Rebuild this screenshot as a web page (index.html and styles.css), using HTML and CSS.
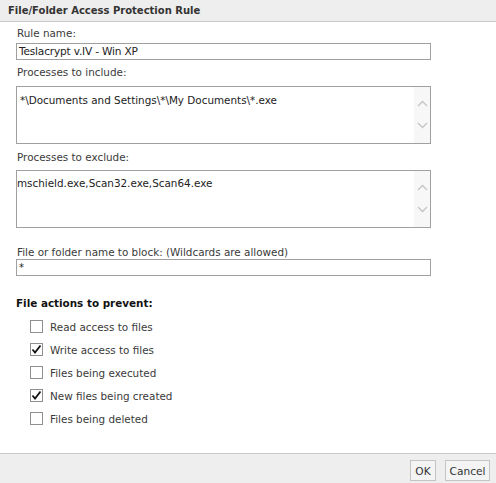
FILE: index.html
```html
<!DOCTYPE html>
<html>
<head>
<meta charset="utf-8">
<link rel="stylesheet" href="styles.css">
</head>
<body>
<div class="dialog">
  <div class="titlebar">File/Folder Access Protection Rule</div>
  <div class="content">
    <div class="label l-rule">Rule name:</div>
    <div class="input">Teslacrypt v.IV - Win XP</div>
    <div class="label l-inc">Processes to include:</div>
    <div class="textbox">
      <div class="textbox-text">*\Documents and Settings\*\My Documents\*.exe</div>
      <div class="scroll">
        <svg class="chev" width="11" height="7" viewBox="0 0 11 7"><path d="M1 6 L5.5 1.5 L10 6" fill="none" stroke="#c4c4c4" stroke-width="1.3"/></svg>
        <svg class="chev" width="11" height="7" viewBox="0 0 11 7"><path d="M1 1 L5.5 5.5 L10 1" fill="none" stroke="#c4c4c4" stroke-width="1.3"/></svg>
      </div>
    </div>
    <div class="label l-exc">Processes to exclude:</div>
    <div class="textbox">
      <div class="textbox-text t2">mschield.exe,Scan32.exe,Scan64.exe</div>
      <div class="scroll">
        <svg class="chev" width="11" height="7" viewBox="0 0 11 7"><path d="M1 6 L5.5 1.5 L10 6" fill="none" stroke="#c4c4c4" stroke-width="1.3"/></svg>
        <svg class="chev" width="11" height="7" viewBox="0 0 11 7"><path d="M1 1 L5.5 5.5 L10 1" fill="none" stroke="#c4c4c4" stroke-width="1.3"/></svg>
      </div>
    </div>
    <div class="label l-block">File or folder name to block: (Wildcards are allowed)</div>
    <div class="input small">*</div>
    <div class="section">File actions to prevent:</div>
    <div class="checks">
      <div class="row"><span class="cb"></span><span>Read access to files</span></div>
      <div class="row"><span class="cb checked"><svg width="11" height="11" viewBox="0 0 11 11"><path d="M1.5 5.5 L4 8.5 L9.5 1.5" fill="none" stroke="#111" stroke-width="1.8"/></svg></span><span>Write access to files</span></div>
      <div class="row"><span class="cb"></span><span>Files being executed</span></div>
      <div class="row"><span class="cb checked"><svg width="11" height="11" viewBox="0 0 11 11"><path d="M1.5 5.5 L4 8.5 L9.5 1.5" fill="none" stroke="#111" stroke-width="1.8"/></svg></span><span>New files being created</span></div>
      <div class="row"><span class="cb"></span><span>Files being deleted</span></div>
    </div>
  </div>
  <div class="footer">
    <button class="btn ok">OK</button>
    <button class="btn cancel">Cancel</button>
  </div>
</div>
</body>
</html>
```

FILE: styles.css
```css
html, body {
  margin: 0;
  padding: 0;
  background: #ffffff;
}
body {
  font-family: "DejaVu Sans", Verdana, sans-serif;
  font-size: 10.4px;
  color: #333333;
}
.dialog {
  width: 496px;
  height: 483px;
  display: flex;
  flex-direction: column;
}
.titlebar {
  height: 22px;
  box-sizing: border-box;
  background: #eeeeee;
  border-bottom: 1px solid #c8c8c8;
  padding-left: 8px;
  font-weight: bold;
  font-size: 10px;
  line-height: 21px;
  color: #333333;
}
.content {
  flex: 1;
  padding: 0 65px 0 16px;
}
.label {
  padding-left: 1px;
  line-height: 14px;
  color: #3a3a3a;
}
.l-rule { margin-top: 4px; margin-bottom: 3px; }
.l-inc { margin-top: 5px; margin-bottom: 7px; }
.l-exc { margin-top: 6px; margin-bottom: 6px; }
.l-block { margin-top: 17px; margin-bottom: 0; }
.input {
  height: 17px;
  box-sizing: border-box;
  border: 1px solid #a0a0a0;
  padding-left: 2px;
  line-height: 15px;
  color: #222222;
  font-size: 10.6px;
  letter-spacing: -0.2px;
}
.input.small {
  font-size: 10px;
  letter-spacing: 0;
}
.textbox {
  height: 58px;
  box-sizing: border-box;
  border: 1px solid #a0a0a0;
  display: flex;
}
.textbox-text {
  flex: 1;
  padding: 6px 2px 0 3px;
  line-height: 14px;
  color: #222222;
  font-size: 10.4px;
}
.textbox-text.t2 {
  padding-top: 5px;
  padding-left: 0;
}
.scroll {
  width: 16px;
  background: #f7f7f7;
  display: flex;
  flex-direction: column;
  align-items: center;
  padding-top: 13px;
  gap: 15px;
}
.chev {
  display: block;
}
.section {
  margin-top: 20px;
  font-weight: bold;
  line-height: 14px;
  color: #111111;
}
.checks {
  margin-top: 5px;
  padding-left: 14px;
}
.row {
  height: 23px;
  display: flex;
  align-items: center;
  gap: 7px;
  color: #3a3a3a;
}
.cb {
  width: 13px;
  height: 13px;
  box-sizing: border-box;
  border: 1px solid #8f8f8f;
  background: #ffffff;
  display: flex;
  align-items: center;
  justify-content: center;
}
.footer {
  height: 30px;
  box-sizing: border-box;
  background: #eeeeee;
  border-top: 1px solid #c8c8c8;
  display: flex;
  justify-content: flex-end;
  align-items: flex-start;
  padding: 6px 6px 0 0;
  gap: 9px;
}
.btn {
  height: 21px;
  box-sizing: border-box;
  border: 1px solid #c4c4c4;
  background: #f4f4f4;
  font-family: "DejaVu Sans", Verdana, sans-serif;
  font-size: 10.6px;
  color: #333333;
  padding: 0 4px;
  margin: 0;
}
.btn.ok { width: 26px; padding: 0; }
.btn.cancel { width: 45px; padding: 0; }
```
